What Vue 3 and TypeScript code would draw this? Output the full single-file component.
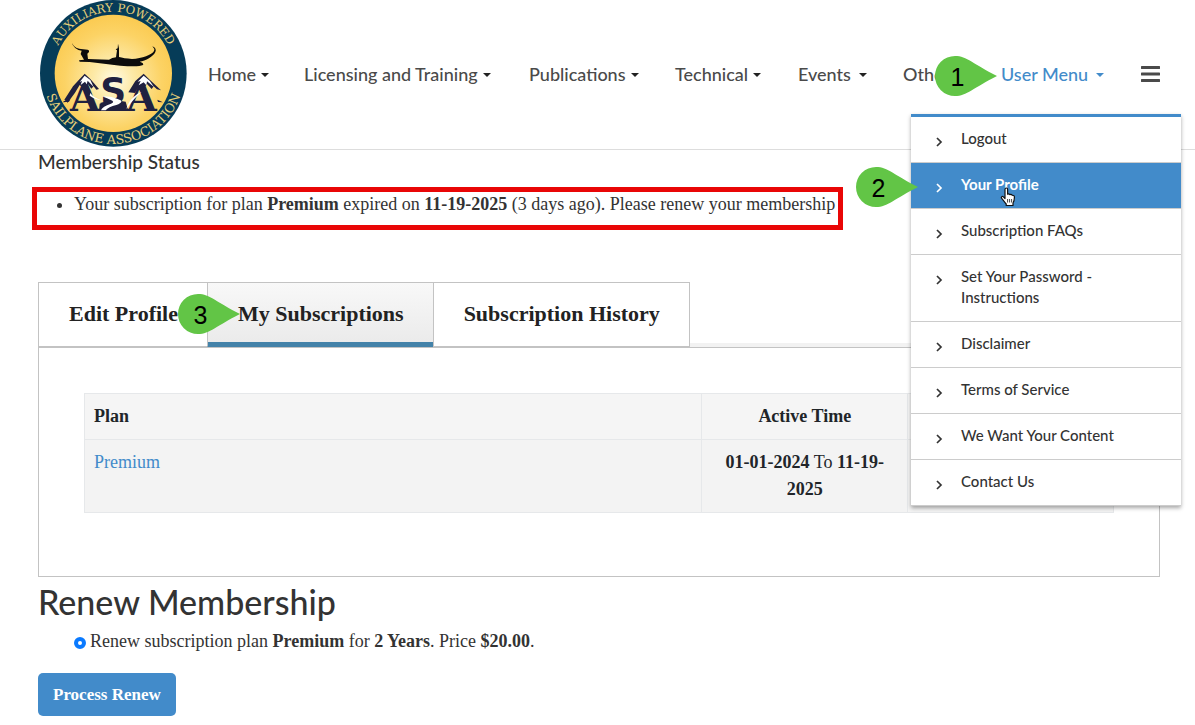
<script setup lang="ts">
import { ref } from 'vue'

interface NavItem {
  label: string
  wide?: boolean
}

const navItems: NavItem[] = [
  { label: 'Home' },
  { label: 'Licensing and Training' },
  { label: 'Publications' },
  { label: 'Technical' },
  { label: 'Events', wide: true },
  { label: 'Other' },
]

const userMenu: string[] = [
  'Logout',
  'Your Profile',
  'Subscription FAQs',
  'Set Your Password - Instructions',
  'Disclaimer',
  'Terms of Service',
  'We Want Your Content',
  'Contact Us',
]

const tabs: string[] = ['Edit Profile', 'My Subscriptions', 'Subscription History']

const activeItem = ref('Your Profile')
const activeTab = ref('My Subscriptions')
const plan = ref('premium')
</script>

<template>
  <div class="page">
    <header class="header">
      <a class="logo" href="#">
        <svg viewBox="29 1 441 441" width="147" height="147" aria-hidden="true">
          <defs>
            <radialGradient id="sun" cx="0.5" cy="0.56" r="0.55">
              <stop offset="0" stop-color="#fffbe6" />
              <stop offset="0.3" stop-color="#fdeaa9" />
              <stop offset="0.75" stop-color="#fcd365" />
              <stop offset="1" stop-color="#fbcb52" />
            </radialGradient>
            <path id="arcTop" d="M64 221A185 185 0 0 1 434 221" />
            <path id="arcBottom" d="M38 200A212 212 0 1 0 460 200" />
          </defs>
          <circle cx="249" cy="221" r="220" fill="#063c58" />
          <circle cx="249" cy="221" r="176" fill="url(#sun)" />
          <text class="ring" font-size="35" text-anchor="middle">
            <textPath href="#arcTop" startOffset="50%">AUXILIARY POWERED</textPath>
          </text>
          <text class="ring" font-size="38" text-anchor="middle">
            <textPath href="#arcBottom" startOffset="50%">SAILPLANE ASSOCIATION</textPath>
          </text>
          <g fill="#0c0c0c">
            <path d="M122 123C128 140 138 146 152 148L172 150Q178 151 176 157L171 162L173 178L236 180Q245 174 257 173L260 152L256 149L262 146L263 132L266 146L266 172Q280 176 305 178C335 176 365 166 371 154Q374 147 366 140Q380 146 375 157C369 171 346 183 328 186Q342 190 338 196Q325 203 270 198L178 187L148 186L146 182L161 180L151 163L154 153Q130 150 122 123Z" />
          </g>
          <g fill="#202040">
            <path d="M102 300L128 260L146 240L163 222L180 238L206 268L198 270L190 260L183 267L172 252L158 264L148 256L134 279L112 309Z" />
            <path d="M294 278L315 244L340 222L359 241L392 272L380 269L370 260L364 268L350 253L339 268L326 259L314 280Z" />
            <path d="M100 305L120 299L116 306L98 308ZM381 300L398 308L383 307Z" />
          </g>
          <g class="mono" fill="#202040">
            <text x="164" y="335" font-size="116" text-anchor="middle">A</text>
            <text x="334" y="335" font-size="116" text-anchor="middle">A</text>
            <text class="sans" x="249" y="309" font-size="108" text-anchor="middle">S</text>
          </g>
          <path d="M163 228L148 247L155 244L151 256L164 246L169 254L172 243L190 262L180 241ZM340 228L322 246L331 244L325 257L340 248L348 257L350 245L371 262L358 243Z" fill="#fff" />
          <path d="M208 312Q236 296 286 306L294 334H206Z" fill="#202040" />
          <path d="M214 290Q242 288 262 298Q286 306 258 316Q234 322 226 332H212Q216 320 242 312Q256 306 240 300Q230 296 214 290ZM334 277Q312 294 288 328Q296 300 320 284ZM180 280Q190 295 212 301Q194 300 178 288Z" fill="#fff" />
        </svg>
      </a>

      <nav class="nav">
        <a v-for="item in navItems" :key="item.label" class="nav-link" :class="{ wide: item.wide }" href="#">
          {{ item.label }}<i class="caret"></i>
        </a>
        <a class="nav-link wide current" href="#">
          User Menu<i class="caret"></i>
          <span class="marker">
            <svg viewBox="0 0 62 40" width="62" height="40" aria-hidden="true">
              <path d="M20 0A20 20 0 0 0 20 40C32 40 38 32 62 20C38 8 32 0 20 0Z" />
            </svg>
            <b>1</b>
          </span>
        </a>
      </nav>

      <button class="burger" type="button" aria-label="Menu">
        <svg viewBox="0 0 19 16" width="19" height="16" aria-hidden="true">
          <path d="M1 1.5H18M1 8H18M1 14.5H18" stroke="#4a4a4a" stroke-width="3" stroke-linecap="round" />
        </svg>
      </button>

      <ul class="menu">
        <li v-for="item in userMenu" :key="item">
          <a href="#" :class="{ active: item === activeItem }">
            <svg class="chevron" viewBox="0 0 8 10" width="8" height="10" aria-hidden="true">
              <path d="M1 1L5 5L1 9" fill="none" stroke="currentColor" stroke-width="1.7" />
            </svg>
            {{ item }}
            <template v-if="item === activeItem">
              <span class="marker">
                <svg viewBox="0 0 62 40" width="62" height="40" aria-hidden="true">
                  <path d="M20 0A20 20 0 0 0 20 40C32 40 38 32 62 20C38 8 32 0 20 0Z" />
                </svg>
                <b>2</b>
              </span>
              <svg class="pointer" viewBox="0 0 16 20" width="16" height="20" aria-hidden="true">
                <path
                  d="M5 11.5V2.6Q5 1 6.3 1T7.6 2.6V7.2Q8.7 6.3 9.9 7.6Q11.3 6.9 12.2 8.3Q14.4 8 14.4 10.2C14.4 13 14 14.5 13 16V18.5H6.2V17C4.5 15 3 13 1.5 11.2C0.8 10 2.3 8.9 3.4 9.9Z"
                  fill="#fff" stroke="#111" stroke-width="1.2" stroke-linejoin="round"
                />
                <path d="M7.6 12V15.5M9.6 12V15.5M11.6 12V15.5" stroke="#111" stroke-width="0.8" />
              </svg>
            </template>
          </a>
        </li>
      </ul>
    </header>

    <main class="content">
      <h4 class="status-title">Membership Status</h4>
      <ul class="status">
        <li>
          Your subscription for plan <strong>Premium</strong> expired on
          <strong>11-19-2025</strong> (3 days ago). Please renew your membership
        </li>
      </ul>

      <div class="tabs" role="tablist">
        <button
          v-for="tab in tabs"
          :key="tab"
          class="tab"
          :class="{ selected: tab === activeTab }"
          type="button"
          role="tab"
          :aria-selected="tab === activeTab"
          @click="activeTab = tab"
        >
          {{ tab }}
          <span v-if="tab === 'My Subscriptions'" class="marker">
            <svg viewBox="0 0 62 40" width="62" height="40" aria-hidden="true">
              <path d="M20 0A20 20 0 0 0 20 40C32 40 38 32 62 20C38 8 32 0 20 0Z" />
            </svg>
            <b>3</b>
          </span>
        </button>
      </div>

      <section class="panel">
        <table class="plans">
          <thead>
            <tr>
              <th class="plan">Plan</th>
              <th>Active Time</th>
              <th></th>
            </tr>
          </thead>
          <tbody>
            <tr>
              <td class="plan"><a href="#">Premium</a></td>
              <td><strong>01-01-2024</strong> To <strong>11-19-2025</strong></td>
              <td></td>
            </tr>
          </tbody>
        </table>
      </section>

      <form class="renew" @submit.prevent>
        <h2>Renew Membership</h2>
        <label class="option">
          <input v-model="plan" type="radio" name="plan" value="premium" />
          <span>Renew subscription plan <strong>Premium</strong> for <strong>2 Years</strong>. Price <strong>$20.00</strong>.</span>
        </label>
        <button class="submit" type="submit">Process Renew</button>
      </form>
    </main>
  </div>
</template>

<style>
body {
  background: #fff;
}
</style>

<style scoped>
.page {
  color: #333;
  font-family: "Liberation Serif", "Times New Roman", serif;
  font-size: 18px;
  line-height: 27px;
}
a {
  color: #428bca;
  text-decoration: none;
}
.header {
  position: relative;
  z-index: 2;
  display: flex;
  align-items: center;
  padding: 0 35px 2px 40px;
  border-bottom: 1px solid #ddd;
}
.logo {
  display: flex;
  margin-right: 21px;
}
.ring {
  fill: #e5cf78;
  font-family: "DejaVu Serif", serif;
}
.mono {
  font-family: "DejaVu Serif", serif;
  font-weight: 700;
}
.sans {
  font-family: "DejaVu Sans", sans-serif;
}
.nav {
  flex: 1;
  display: grid;
  grid-template-columns: 96fr 225fr 146fr 123fr 105fr 98fr 140fr;
}
.nav-link {
  position: relative;
  display: flex;
  align-items: center;
  gap: 5px;
  color: #4a4a4a;
  font: 500 18px/24px Lato, "Open Sans", sans-serif;
  white-space: nowrap;
}
.nav-link.wide {
  gap: 8px;
}
.nav-link.current {
  color: #428bca;
}
.caret {
  margin-top: 3px;
  border: 4px solid transparent;
  border-top-color: #222;
  border-bottom: 0;
}
.current .caret {
  border-top-color: #428bca;
}
.burger {
  display: flex;
  padding: 0;
  border: 0;
  background: none;
}
.marker {
  position: absolute;
  z-index: 3;
  width: 62px;
  height: 40px;
}
.marker svg {
  display: block;
  fill: #62c546;
}
.marker b {
  position: absolute;
  top: 0;
  left: 0;
  width: 45px;
  color: #000;
  font: 400 25px/42px "Liberation Sans", Arial, sans-serif;
  text-align: center;
}
.current .marker {
  left: -66px;
  top: -6px;
}
.menu {
  position: absolute;
  top: 114px;
  right: 14px;
  width: 270px;
  margin: 0;
  padding: 0;
  list-style: none;
  background: #fff;
  border-top: 3px solid #428bca;
  box-shadow: 0 2px 4px rgba(0, 0, 0, 0.35);
}
.menu li {
  border-bottom: 1px solid #ccc;
}
.menu a {
  position: relative;
  display: block;
  padding: 11px 50px 13px;
  color: #333;
  font: 500 15px/21px Lato, "Open Sans", sans-serif;
}
.menu a.active {
  background: #428bca;
  color: #fff;
  font-weight: 700;
}
.chevron {
  position: absolute;
  left: 25px;
  top: 20px;
}
.menu .marker {
  left: -55px;
  top: 4px;
}
.pointer {
  position: absolute;
  left: 89px;
  top: 24px;
}
.content {
  padding: 0 35px 9px 38px;
}
h2,
h4 {
  margin: 0;
  font-family: Lato, "Open Sans", sans-serif;
  font-weight: 500;
}
.status-title {
  font-size: 19px;
  line-height: 23px;
}
.status {
  width: fit-content;
  margin: 14px 0 52px -6px;
  padding: 0 3px 9px 37px;
  border: 5px solid #e90606;
  line-height: 24px;
}
.tabs {
  display: flex;
  box-shadow: inset 0 -4px #f2f2f2;
}
.tab {
  position: relative;
  height: 65px;
  padding: 0 29px 2px 30px;
  border: 1px solid #c3c3c3;
  border-right: 0;
  background: #fff;
  color: #222;
  font: 700 22px/33px "Liberation Serif", "Times New Roman", serif;
}
.tab:last-child {
  border-right: 1px solid #c3c3c3;
}
.tab.selected {
  border-bottom-color: #4382a9;
  background: linear-gradient(#f8f8f8, #eaeaea);
  box-shadow: inset 0 -4px #4382a9;
}
.tab .marker {
  left: -30px;
  top: 11px;
}
.panel {
  padding: 45px 45px 63px;
  border: 1px solid #c3c3c3;
}
.plans {
  width: 100%;
  table-layout: fixed;
  border-collapse: collapse;
  background: #f3f3f3;
  color: #212529;
}
.plans th {
  background: #f5f5f5;
}
.plans th,
.plans td {
  box-sizing: border-box;
  width: 20%;
  padding: 9px;
  border: 1px solid #e6e8ea;
  text-align: center;
  vertical-align: top;
}
.plans .plan {
  width: 60%;
  text-align: left;
}
.renew h2 {
  padding-top: 5px;
  font-size: 34px;
  line-height: 40px;
}
.option {
  display: flex;
  align-items: center;
  gap: 4px;
  margin: 6px 0 18px 36px;
}
.option input {
  appearance: none;
  width: 12px;
  height: 12px;
  margin: 3px 0 0;
  border: 4px solid #0a7aff;
  border-radius: 50%;
  background: #fff;
}
.submit {
  padding: 8px 15px;
  border: 0;
  border-radius: 5px;
  background: #428bca;
  color: #fff;
  font: 700 17px/27px "Liberation Serif", "Times New Roman", serif;
}
</style>
